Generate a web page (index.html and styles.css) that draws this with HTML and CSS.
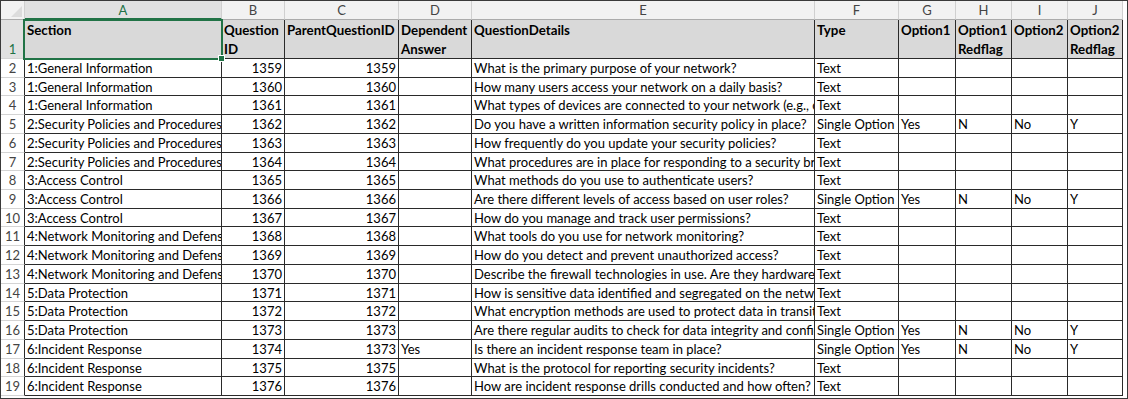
FILE: index.html
```html
<!DOCTYPE html>
<html>
<head>
<meta charset="utf-8">
<link rel="stylesheet" href="styles.css">
</head>
<body>
<div class="frame">
<div class="sheet">
  <div class="corner"><span class="tri"></span></div>
  <div class="ch ch-sel">A</div><div class="ch">B</div><div class="ch">C</div><div class="ch">D</div><div class="ch">E</div><div class="ch">F</div><div class="ch">G</div><div class="ch">H</div><div class="ch">I</div><div class="ch">J</div>

  <div class="rh rh-sel rh-top">1</div>
  <div class="c hd sel">Section</div><div class="c hd">Question ID</div><div class="c hd">ParentQuestionID</div><div class="c hd">Dependent Answer</div><div class="c hd">QuestionDetails</div><div class="c hd">Type</div><div class="c hd">Option1</div><div class="c hd">Option1 Redflag</div><div class="c hd">Option2</div><div class="c hd">Option2 Redflag</div>

  <div class="rh">2</div><div class="c">1:General Information</div><div class="c n">1359</div><div class="c n">1359</div><div class="c"></div><div class="c">What is the primary purpose of your network?</div><div class="c">Text</div><div class="c"></div><div class="c"></div><div class="c"></div><div class="c"></div>
  <div class="rh">3</div><div class="c">1:General Information</div><div class="c n">1360</div><div class="c n">1360</div><div class="c"></div><div class="c">How many users access your network on a daily basis?</div><div class="c">Text</div><div class="c"></div><div class="c"></div><div class="c"></div><div class="c"></div>
  <div class="rh">4</div><div class="c">1:General Information</div><div class="c n">1361</div><div class="c n">1361</div><div class="c"></div><div class="c">What types of devices are connected to your network (e.g., computers, servers, IoT devices)?</div><div class="c">Text</div><div class="c"></div><div class="c"></div><div class="c"></div><div class="c"></div>
  <div class="rh">5</div><div class="c">2:Security Policies and Procedures</div><div class="c n">1362</div><div class="c n">1362</div><div class="c"></div><div class="c">Do you have a written information security policy in place?</div><div class="c">Single Option</div><div class="c">Yes</div><div class="c">N</div><div class="c">No</div><div class="c">Y</div>
  <div class="rh">6</div><div class="c">2:Security Policies and Procedures</div><div class="c n">1363</div><div class="c n">1363</div><div class="c"></div><div class="c">How frequently do you update your security policies?</div><div class="c">Text</div><div class="c"></div><div class="c"></div><div class="c"></div><div class="c"></div>
  <div class="rh">7</div><div class="c">2:Security Policies and Procedures</div><div class="c n">1364</div><div class="c n">1364</div><div class="c"></div><div class="c">What procedures are in place for responding to a security breach?</div><div class="c">Text</div><div class="c"></div><div class="c"></div><div class="c"></div><div class="c"></div>
  <div class="rh">8</div><div class="c">3:Access Control</div><div class="c n">1365</div><div class="c n">1365</div><div class="c"></div><div class="c">What methods do you use to authenticate users?</div><div class="c">Text</div><div class="c"></div><div class="c"></div><div class="c"></div><div class="c"></div>
  <div class="rh">9</div><div class="c">3:Access Control</div><div class="c n">1366</div><div class="c n">1366</div><div class="c"></div><div class="c">Are there different levels of access based on user roles?</div><div class="c">Single Option</div><div class="c">Yes</div><div class="c">N</div><div class="c">No</div><div class="c">Y</div>
  <div class="rh">10</div><div class="c">3:Access Control</div><div class="c n">1367</div><div class="c n">1367</div><div class="c"></div><div class="c">How do you manage and track user permissions?</div><div class="c">Text</div><div class="c"></div><div class="c"></div><div class="c"></div><div class="c"></div>
  <div class="rh">11</div><div class="c">4:Network Monitoring and Defense</div><div class="c n">1368</div><div class="c n">1368</div><div class="c"></div><div class="c">What tools do you use for network monitoring?</div><div class="c">Text</div><div class="c"></div><div class="c"></div><div class="c"></div><div class="c"></div>
  <div class="rh">12</div><div class="c">4:Network Monitoring and Defense</div><div class="c n">1369</div><div class="c n">1369</div><div class="c"></div><div class="c">How do you detect and prevent unauthorized access?</div><div class="c">Text</div><div class="c"></div><div class="c"></div><div class="c"></div><div class="c"></div>
  <div class="rh">13</div><div class="c">4:Network Monitoring and Defense</div><div class="c n">1370</div><div class="c n">1370</div><div class="c"></div><div class="c">Describe the firewall technologies in use. Are they hardware or software based?</div><div class="c">Text</div><div class="c"></div><div class="c"></div><div class="c"></div><div class="c"></div>
  <div class="rh">14</div><div class="c">5:Data Protection</div><div class="c n">1371</div><div class="c n">1371</div><div class="c"></div><div class="c">How is sensitive data identified and segregated on the network?</div><div class="c">Text</div><div class="c"></div><div class="c"></div><div class="c"></div><div class="c"></div>
  <div class="rh">15</div><div class="c">5:Data Protection</div><div class="c n">1372</div><div class="c n">1372</div><div class="c"></div><div class="c">What encryption methods are used to protect data in transit and at rest?</div><div class="c">Text</div><div class="c"></div><div class="c"></div><div class="c"></div><div class="c"></div>
  <div class="rh">16</div><div class="c">5:Data Protection</div><div class="c n">1373</div><div class="c n">1373</div><div class="c"></div><div class="c">Are there regular audits to check for data integrity and confidentiality?</div><div class="c">Single Option</div><div class="c">Yes</div><div class="c">N</div><div class="c">No</div><div class="c">Y</div>
  <div class="rh">17</div><div class="c">6:Incident Response</div><div class="c n">1374</div><div class="c n">1373</div><div class="c">Yes</div><div class="c">Is there an incident response team in place?</div><div class="c">Single Option</div><div class="c">Yes</div><div class="c">N</div><div class="c">No</div><div class="c">Y</div>
  <div class="rh">18</div><div class="c">6:Incident Response</div><div class="c n">1375</div><div class="c n">1375</div><div class="c"></div><div class="c">What is the protocol for reporting security incidents?</div><div class="c">Text</div><div class="c"></div><div class="c"></div><div class="c"></div><div class="c"></div>
  <div class="rh">19</div><div class="c">6:Incident Response</div><div class="c n">1376</div><div class="c n">1376</div><div class="c"></div><div class="c">How are incident response drills conducted and how often?</div><div class="c">Text</div><div class="c"></div><div class="c"></div><div class="c"></div><div class="c"></div>
</div>
</div>
</body>
</html>
```

FILE: styles.css
```css
html, body {
  margin: 0;
  padding: 0;
  background: #ffffff;
}
.frame {
  box-sizing: border-box;
  width: 1128px;
  height: 399px;
  border: 1px solid #3a3a3a;
  padding: 0 4px 2px 0;
  overflow: hidden;
  background: #ffffff;
}
.sheet {
  display: grid;
  grid-template-columns: 24px 197px 63px 114px 73px 343px 84px 57px 56px 56px 55px;
  grid-template-rows: 19px 39px repeat(18, 18.72px);
  font-family: "Lato", "Liberation Sans", sans-serif;
  font-size: 13px;
  color: #000000;
}
.corner {
  box-sizing: border-box;
  background: #f2f2f2;
  border-right: 1px solid #d0d0d0;
  border-bottom: 1px solid #ababab;
  position: relative;
}
.tri {
  position: absolute;
  right: 2px;
  bottom: 2px;
  width: 0;
  height: 0;
  border-left: 11px solid transparent;
  border-bottom: 11px solid #dcdcdc;
}
.ch {
  box-sizing: border-box;
  background: #f2f2f2;
  border-right: 1px solid #d0d0d0;
  border-bottom: 1px solid #ababab;
  color: #444444;
  text-align: center;
  line-height: 18px;
  font-size: 13px;
}
.ch-sel {
  background: #e1e1e1;
  color: #217346;
  border-bottom: 2px solid #217346;
}
.rh {
  box-sizing: border-box;
  background: #ffffff;
  border-right: 1px solid #2a2a2a;
  border-bottom: 1px solid #d4d4d4;
  color: #444444;
  text-align: center;
  font-size: 13px;
  line-height: 18px;
}
.rh-sel {
  background: #e1e1e1;
  color: #217346;
}
.rh-top {
  display: flex;
  align-items: flex-end;
  justify-content: center;
  padding-bottom: 0;
}
.c {
  box-sizing: border-box;
  border-right: 1px solid #2a2a2a;
  border-bottom: 1px solid #2a2a2a;
  padding: 0 2px;
  white-space: nowrap;
  overflow: hidden;
  line-height: 18px;
}
.n {
  text-align: right;
}
.hd {
  background: #d9d9d9;
  font-weight: bold;
  font-size: 13.3px;
  white-space: normal;
  line-height: 19px;
  padding-top: 1px;
}
.sel {
  position: relative;
  overflow: visible;
}
.sel::after {
  content: "";
  position: absolute;
  left: -2px;
  top: -1px;
  right: -2px;
  bottom: -2px;
  border: 2px solid #217346;
  pointer-events: none;
}
.sel::before {
  content: "";
  position: absolute;
  right: -4px;
  bottom: -4px;
  width: 5px;
  height: 5px;
  background: #217346;
  border: 1px solid #ffffff;
  z-index: 2;
}
```
